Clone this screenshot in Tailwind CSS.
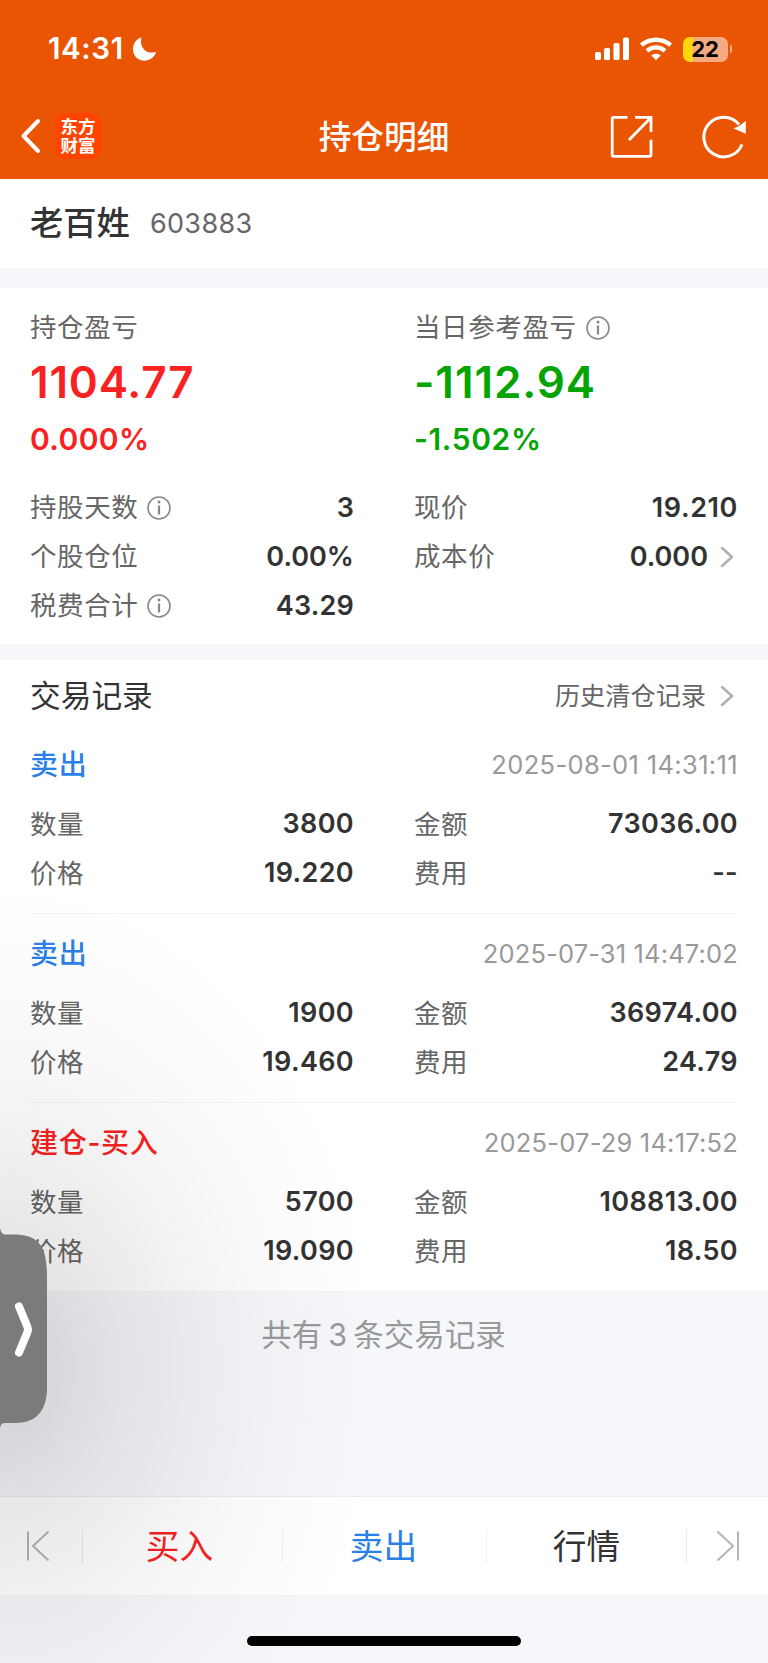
<!DOCTYPE html>
<html lang="zh-CN">
<head>
  <meta charset="UTF-8">
  <meta name="viewport" content="width=device-width, initial-scale=1.0">
  <title>持仓明细</title>
  <script src="https://cdn.jsdelivr.net/npm/@tailwindcss/browser@4"></script>
  <style>
    body { font-family: Inter, 'Noto Sans CJK SC', sans-serif; }
  </style>
</head>
<body class="relative flex h-[1663px] w-[768px] flex-col overflow-hidden bg-[#f6f7fa] text-[27px] leading-none text-[#333]">
  <!-- Header -->
  <header class="h-[179px] shrink-0 bg-[#ea5504] text-white">
    <div class="flex h-[98px] items-center pl-[48px] pr-[36px]">
      <span class="text-[29.5px] font-semibold tracking-[0.6px]">14:31</span>
      <svg class="ml-[8px]" width="26" height="26" viewBox="0 0 26 26" fill="white"><path d="M9.5 1.3C8.4 5.8 9 10.4 12.3 13.7C15.5 16.9 20 17.2 24.3 15.7C22.3 21.2 18 24.7 12.3 24.7C5.8 24.7 1 19.7 1 13.2C1 7.5 4.3 3 9.5 1.3Z"/></svg>
      <svg class="ml-auto" width="34" height="24" viewBox="0 0 34 24" fill="white">
        <rect x="0" y="15" width="6" height="8" rx="1.6"/>
        <rect x="9" y="11" width="6" height="12" rx="1.6"/>
        <rect x="18.5" y="6" width="6" height="17" rx="1.6"/>
        <rect x="28" y="0.5" width="6" height="22.5" rx="1.6"/>
      </svg>
      <svg class="ml-[10px]" width="34" height="24" viewBox="0 0 34 24" fill="none" stroke="white" stroke-width="4.3">
        <path d="M2.4 8.2C10.5 .9 23.5 .9 31.6 8.2"/>
        <path d="M8 13.8C13.2 9.2 20.8 9.2 26 13.8"/>
        <path d="M12.2 18.6C15 16.2 19 16.2 21.8 18.6L17 23.3Z" fill="white" stroke="none"/>
      </svg>
      <div class="ml-[10px] flex h-[25px] w-[45px] items-center justify-center rounded-[7px] bg-linear-to-r from-[#ffd60a] from-22% to-[#f5aa82] to-22% text-[22px] font-bold text-black">22</div>
      <span class="ml-[2px] h-[8px] w-[2.5px] rounded-r-full bg-[#f5aa82]"></span>
    </div>
    <div class="grid h-[78px] grid-cols-[1fr_auto_1fr] items-center">
      <div class="flex items-center pb-[2px] pl-[20px]">
        <svg width="22" height="36" viewBox="0 0 22 36" fill="none" stroke="white" stroke-width="4" stroke-linecap="round" stroke-linejoin="round"><path d="M18 3L3.5 18L18 33"/></svg>
        <div class="ml-[13px] flex h-[46px] w-[46px] flex-col items-center justify-center gap-[2px] rounded-[9px] bg-[#ff4400] text-[17.5px] font-bold"><span>东方</span><span>财富</span></div>
      </div>
      <h1 class="text-[32.7px] font-medium">持仓明细</h1>
      <div class="flex items-center justify-end pr-[22px]">
        <svg width="44" height="44" viewBox="0 0 44 44" fill="none" stroke="white" stroke-width="2.8">
          <path d="M17.5 2.4H4Q2.2 2.4 2.2 4.2V39.5Q2.2 41.3 4 41.3H39.2Q41 41.3 41 39.5V24.7M25 2.4H41V17M40.5 3L19 25"/>
        </svg>
        <svg class="ml-[48px]" width="44" height="44" viewBox="0 0 44 44" fill="none" stroke="white" stroke-width="3">
          <path d="M37 9.5A19.8 19.8 0 1 0 40 29.5"/>
          <path d="M43.8 6V18.8L31.5 13.5Q37 11.5 43.8 6Z" fill="white" stroke="none"/>
        </svg>
      </div>
    </div>
  </header>

  <!-- Stock name -->
  <section class="flex h-[89px] shrink-0 items-center bg-white pl-[30px]">
    <span class="text-[33.3px] font-medium">老百姓</span>
    <span class="ml-[20px] text-[27px] tracking-[0.35px] text-[#666]">603883</span>
  </section>

  <!-- Position summary -->
  <section class="mt-[20px] h-[356px] shrink-0 bg-white px-[30px] pt-[20px]">
    <div class="grid grid-cols-[324px_1fr] gap-x-[60px]">
      <div>
        <div class="flex h-[38px] items-center pt-[1px] text-[26.5px] tracking-[0.6px] text-[#666]">持仓盈亏</div>
        <div class="flex h-[72px] items-center text-[44px] font-semibold tracking-[0.8px] text-[#f82222]">1104.77</div>
        <div class="flex h-[42px] items-center text-[30px] font-semibold tracking-[0.4px] text-[#f82222]">0.000%</div>
      </div>
      <div>
        <div class="flex h-[38px] items-center pt-[1px] text-[26.5px] tracking-[0.6px] text-[#666]">当日参考盈亏<svg class="ml-[9px]" width="24" height="24" viewBox="0 0 24 24" fill="none" stroke="#888" stroke-width="1.6"><circle cx="12" cy="12" r="11"/><path d="M12 9.5V18.5" stroke-width="2.2"/><circle cx="12" cy="6" r="1.5" fill="#888" stroke="none"/></svg></div>
        <div class="flex h-[72px] items-center text-[44px] font-semibold tracking-[0.9px] text-[#04a404]">-1112.94</div>
        <div class="flex h-[42px] items-center text-[30px] font-semibold tracking-[0.6px] text-[#04a404]">-1.502%</div>
      </div>
    </div>
    <div class="mt-[23px] grid grid-cols-[324px_1fr] gap-x-[60px]">
      <div class="flex h-[49px] items-center"><span class="text-[26.5px] tracking-[0.6px] text-[#666]">持股天数</span><svg class="ml-[9px]" width="24" height="24" viewBox="0 0 24 24" fill="none" stroke="#888" stroke-width="1.6"><circle cx="12" cy="12" r="11"/><path d="M12 9.5V18.5" stroke-width="2.2"/><circle cx="12" cy="6" r="1.5" fill="#888" stroke="none"/></svg><span class="ml-auto font-semibold">3</span></div>
      <div class="flex h-[49px] items-center justify-between"><span class="text-[26.5px] tracking-[0.6px] text-[#666]">现价</span><span class="font-semibold tracking-[0.6px]">19.210</span></div>
      <div class="flex h-[49px] items-center justify-between"><span class="text-[26.5px] tracking-[0.6px] text-[#666]">个股仓位</span><span class="font-semibold">0.00%</span></div>
      <div class="flex h-[49px] items-center"><span class="text-[26.5px] tracking-[0.6px] text-[#666]">成本价</span><span class="ml-auto font-semibold">0.000</span><svg class="ml-[12px] mr-[4px]" width="14" height="22" viewBox="0 0 14 22" fill="none" stroke="#b0b0b0" stroke-width="2.5" stroke-linecap="round" stroke-linejoin="round"><path d="M2 2L12 11L2 20"/></svg></div>
      <div class="flex h-[49px] items-center"><span class="text-[26.5px] tracking-[0.6px] text-[#666]">税费合计</span><svg class="ml-[9px]" width="24" height="24" viewBox="0 0 24 24" fill="none" stroke="#888" stroke-width="1.6"><circle cx="12" cy="12" r="11"/><path d="M12 9.5V18.5" stroke-width="2.2"/><circle cx="12" cy="6" r="1.5" fill="#888" stroke="none"/></svg><span class="ml-auto font-semibold tracking-[0.2px]">43.29</span></div>
    </div>
  </section>

  <!-- Trade records -->
  <section class="mt-[16px] h-[631px] shrink-0 bg-white px-[30px]">
    <div class="flex h-[65px] items-center pt-[7px]">
      <h2 class="text-[30.7px]">交易记录</h2>
      <span class="ml-auto pt-[1px] text-[25.2px] text-[#666]">历史清仓记录</span>
      <svg class="ml-[14px] mr-[4px]" width="14" height="22" viewBox="0 0 14 22" fill="none" stroke="#b0b0b0" stroke-width="2.5" stroke-linecap="round" stroke-linejoin="round"><path d="M2 2L12 11L2 20"/></svg>
    </div>
    <div id="records"></div>
  </section>

  <p class="mt-[27px] flex h-[34px] shrink-0 items-center justify-center pr-[1px] text-[30.5px] text-[#999]">共有<span class="mx-[6px]">3</span>条交易记录</p>

  <!-- Bottom nav -->
  <nav class="mt-auto mb-[68px] flex h-[99px] shrink-0 items-center border-t border-[#ececee] bg-white text-[33.7px]">
    <div class="flex w-[82px] justify-center pr-[6px]">
      <svg width="24" height="30" viewBox="0 0 24 30" fill="none" stroke="#b4b4b4" stroke-width="2"><path d="M2 .5V29.5M22.5 .5L7 15L22.5 29.5"/></svg>
    </div>
    <div class="flex h-[33px] w-[200px] items-center justify-center border-l border-[#e8e8e8] pt-[2px] pr-[6px] text-[#f82222]">买入</div>
    <div class="flex h-[33px] w-[204px] items-center justify-center border-l border-[#efefef] pt-[2px] pr-[2px] text-[#2a7fe8]">卖出</div>
    <div class="flex h-[33px] w-[200px] items-center justify-center border-l border-[#efefef] pt-[2px]">行情</div>
    <div class="flex h-[33px] flex-1 items-center justify-center border-l border-[#e8e8e8]">
      <svg width="24" height="30" viewBox="0 0 24 30" fill="none" stroke="#b4b4b4" stroke-width="2"><path d="M22 .5V29.5M1.5 .5L17 15L1.5 29.5"/></svg>
    </div>
  </nav>

  <!-- Home indicator -->
  <div class="absolute bottom-[17px] left-[247px] h-[10px] w-[274px] rounded-full bg-black"></div>

  <!-- Floating side handle and its shadow -->
  <div class="pointer-events-none absolute top-[840px] left-0 h-[823px] w-[400px] bg-[radial-gradient(ellipse_380px_490px_at_0px_530px,rgb(0_0_0/.15)_0%,rgb(0_0_0/.12)_15%,rgb(0_0_0/.09)_28%,rgb(0_0_0/.055)_48%,rgb(0_0_0/.027)_66%,rgb(0_0_0/.01)_85%,transparent_100%)]"></div>
  <svg class="absolute top-[1228px] left-0" width="48" height="200" viewBox="0 0 48 200" fill="none">
    <path d="M0 0C1 4 2 6.5 6 6.5H16C38 7.5 47 17 47 48V160C47 180 38 195 16 195H6C2 195 1 196 0 200Z" fill="#7b7b7c"/>
    <path d="M19 78.5L27.5 99Q28.5 101.5 27.5 104L19 124.5" stroke="white" stroke-width="8" stroke-linecap="round"/>
  </svg>

  <script>
    const records = [
      { type: "卖出", color: "text-[#2a7fe8]", time: "2025-08-01 14:31:11", spacing: "tracking-[0.35px]", qty: "3800", amount: "73036.00", price: "19.220", fee: "--" },
      { type: "卖出", color: "text-[#2a7fe8]", time: "2025-07-31 14:47:02", spacing: "tracking-[0.15px]", qty: "1900", amount: "36974.00", price: "19.460", fee: "24.79" },
      { type: "建仓-买入", color: "text-[#f82222]", time: "2025-07-29 14:17:52", spacing: "tracking-[0.2px]", qty: "5700", amount: "108813.00", price: "19.090", fee: "18.50" },
    ];

    const cell = (label, value) => `
      <div class="flex h-[49px] items-center justify-between">
        <span class="pt-[1px] text-[26.5px] tracking-[0.6px] text-[#666]">${label}</span><span class="font-semibold tracking-[0.35px]">${value}</span>
      </div>`;

    document.getElementById("records").innerHTML = records.map(r => `
      <div class="h-[189px] border-b border-[#f3f3f4] last:border-0">
        <div class="flex h-[74px] items-center justify-between pt-[5px]">
          <span class="text-[28px] font-medium tracking-[0.7px] ${r.color}">${r.type}</span>
          <span class="text-[25.5px] text-[#999] ${r.spacing}">${r.time}</span>
        </div>
        <div class="grid grid-cols-[324px_1fr] gap-x-[60px]">
          ${cell("数量", r.qty)}${cell("金额", r.amount)}${cell("价格", r.price)}${cell("费用", r.fee)}
        </div>
      </div>`).join("");
  </script>
</body>
</html>
